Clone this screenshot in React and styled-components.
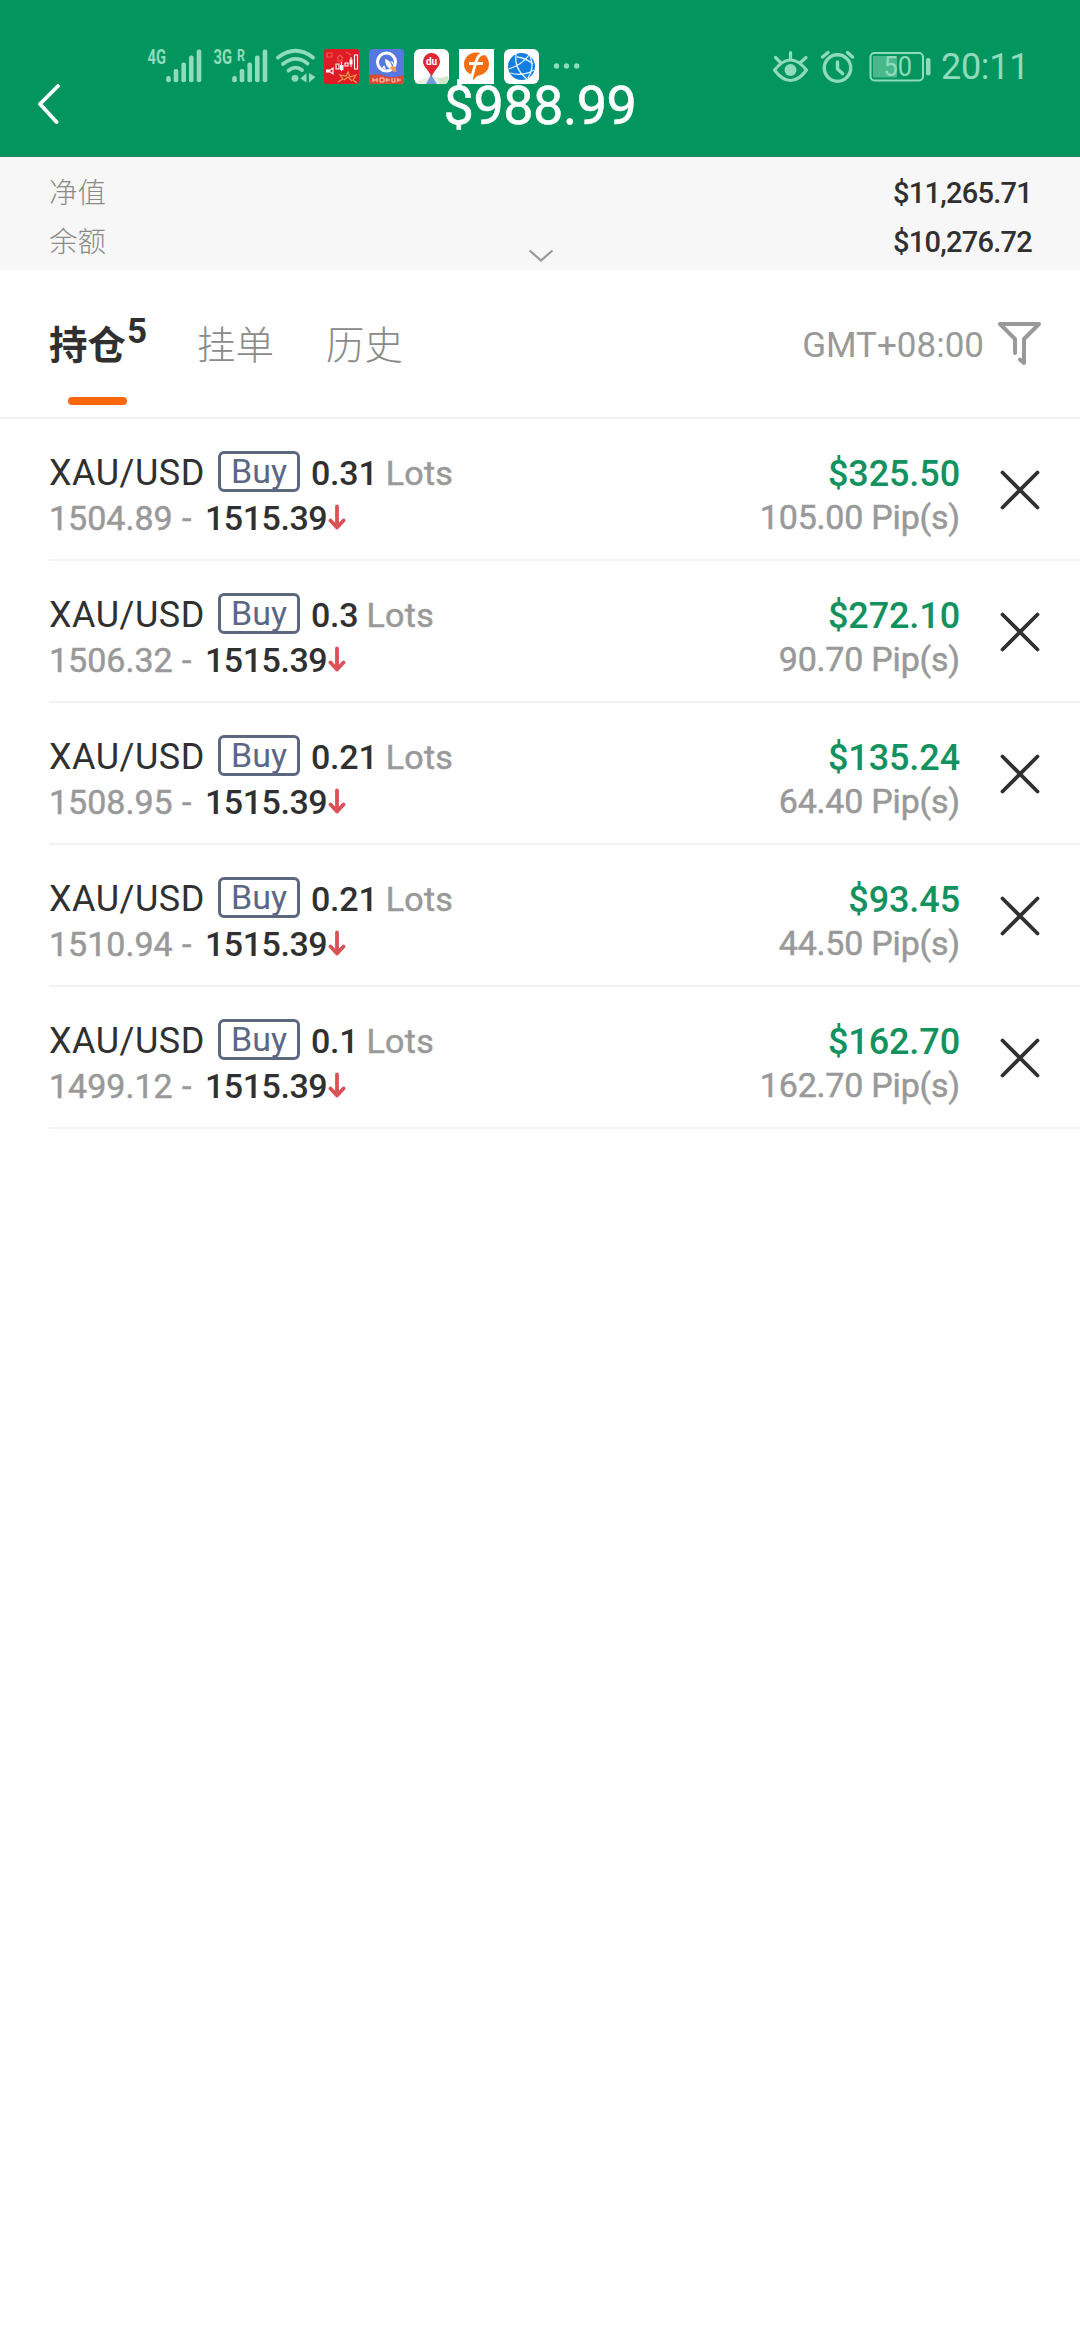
import React from 'react';
import styled, { createGlobalStyle } from 'styled-components';

const GlobalStyle = createGlobalStyle`
  * { box-sizing: border-box; }
  body {
    margin: 0;
    background: #fff;
    color: #303030;
    font-family: Roboto, "Noto Sans CJK SC", sans-serif;
  }
`;

const Screen = styled.main`
  width: 1080px;
  min-height: 2340px;
  background: #fff;
`;

const Header = styled.header`
  height: 157px;
  padding-top: 44px;
  background: #02965e;
  border-bottom: 1px solid #278861;
`;

const StatusBar = styled.div`
  display: flex;
  align-items: center;
  height: 40px;
  padding: 0 53px 0 147px;
  color: #90dbbb;
`;

const Glyph = styled.svg`
  display: block;
  flex: none;
  width: ${(p) => p.$w}px;
  height: 40px;
  margin-left: ${(p) => p.$gap || 0}px;
  overflow: visible;
`;

const Clock = styled.span`
  width: 86px;
  margin-left: auto;
  font-size: 36px;
  line-height: 40px;
  letter-spacing: -0.3px;
  padding-top: 6px;
  white-space: nowrap;
`;

const StatusRight = styled.div`
  display: flex;
  align-items: center;
  width: 255px;
  margin-left: auto;
`;

const TitleRow = styled.div`
  display: grid;
  grid-template-columns: 100px 1fr 100px;
  height: 42px;
`;

const BackButton = styled.button`
  display: flex;
  padding: 0 0 0 36px;
  border: 0;
  background: none;
`;

const Total = styled.h1`
  margin: 0;
  color: #fff;
  font-size: 54px;
  font-weight: 400;
  line-height: 43px;
  letter-spacing: -0.5px;
  text-align: center;
  -webkit-text-stroke: 0.6px #fff;
`;

const Summary = styled.section`
  display: grid;
  grid-template-columns: 1fr 26px 1fr;
  height: 113px;
  padding: 11px 48px 0 49px;
  background: #f7f7f7;
`;

const SummaryColumn = styled.div`
  display: flex;
  flex-direction: column;
  align-items: ${(p) => (p.$end ? 'flex-end' : 'flex-start')};
`;

const SummaryLabel = styled.span`
  height: 49px;
  color: #8a8a8a;
  font-size: 28.5px;
  font-weight: 300;
  line-height: 51px;
`;

const SummaryValue = styled.span`
  height: 49px;
  font-size: 29px;
  font-weight: 500;
  line-height: 50px;
  letter-spacing: -0.75px;
`;

const Expand = styled.svg`
  display: block;
  align-self: end;
  width: 26px;
  height: 13px;
  margin-bottom: 8px;
`;

const TabBar = styled.nav`
  display: flex;
  height: 149px;
  padding: 0 37px 0 49px;
  border-bottom: 2px solid #f3f3f3;
`;

const Tab = styled.div`
  position: relative;
  display: flex;
  width: ${(p) => p.$w}px;
  font-size: 38.5px;
  line-height: 151px;
  font-weight: ${(p) => (p.$active ? 700 : 300)};
  color: ${(p) => (p.$active ? '#303030' : '#8a8a8a')};
`;

const Count = styled.span`
  margin-left: 1px;
  font-size: 35px;
  font-weight: 700;
  line-height: 124px;
`;

const Underline = styled.span`
  position: absolute;
  left: 19px;
  bottom: 12px;
  width: 59px;
  height: 8px;
  border-radius: 4px;
  background: #fb670c;
`;

const Zone = styled.div`
  margin-left: auto;
  color: #999;
  font-size: 35px;
  line-height: 151px;
  letter-spacing: 0;
`;

const Filter = styled.svg`
  width: 46px;
  height: 60px;
  margin: 43px 0 0 13px;
  flex: none;
`;

const List = styled.ul`
  margin: 0;
  padding: 0 0 0 49px;
  list-style: none;
`;

const Row = styled.li`
  display: flex;
  height: 142px;
  padding-top: 32px;
  border-bottom: 2px solid #f3f3f3;
`;

const Info = styled.div`
  flex: 1;
`;

const Line = styled.div`
  display: flex;
  align-items: center;
  height: ${(p) => p.$h}px;
  white-space: nowrap;
  font-size: 34px;
  line-height: ${(p) => p.$h}px;
`;

const Symbol = styled.span`
  width: 169px;
  padding-top: 3px;
  font-size: 36px;
  letter-spacing: 0.5px;
`;

const Side = styled.span`
  display: flex;
  justify-content: center;
  width: 82px;
  height: 41px;
  margin-right: 11px;
  border: 3px solid #5b6880;
  border-radius: 6px;
  color: #5b6785;
  font-size: 34px;
  line-height: 35px;
`;

const Strong = styled.span`
  padding-top: ${(p) => p.$top || 0}px;
  color: #303030;
  font-weight: 500;
  letter-spacing: ${(p) => p.$ls || 0}px;
`;

const Muted = styled.span`
  padding-top: ${(p) => p.$top || 0}px;
  width: ${(p) => (p.$w ? `${p.$w}px` : 'auto')};
  margin-left: ${(p) => p.$gap || 0}px;
  color: #999;
  letter-spacing: ${(p) => p.$ls || 0}px;
  -webkit-text-stroke: 0.5px #999;
`;

const Arrow = styled.svg`
  width: 18px;
  height: 26px;
  margin: -2px 0 0 1px;
`;

const Result = styled.div`
  display: flex;
  flex-direction: column;
  align-items: flex-end;
  width: 240px;
`;

const Profit = styled.span`
  height: 43px;
  color: #13925f;
  font-size: 36px;
  font-weight: 500;
  line-height: 46px;
  letter-spacing: -0.1px;
`;

const Pips = styled.span`
  height: 42px;
  color: #999;
  font-size: 34px;
  line-height: 47px;
  letter-spacing: -0.2px;
  -webkit-text-stroke: 0.5px #999;
`;

const Close = styled.button`
  display: flex;
  width: 120px;
  padding: 18px 0 0 39px;
  border: 0;
  background: none;
`;

const positions = [
  { lots: '0.31', open: '1504.89', profit: '$325.50', pips: '105.00' },
  { lots: '0.3', open: '1506.32', profit: '$272.10', pips: '90.70' },
  { lots: '0.21', open: '1508.95', profit: '$135.24', pips: '64.40' },
  { lots: '0.21', open: '1510.94', profit: '$93.45', pips: '44.50' },
  { lots: '0.1', open: '1499.12', profit: '$162.70', pips: '162.70' },
];

const bars = [
  [21.5, 32],
  [29, 25],
  [36.7, 18.5],
  [44.3, 11.5],
  [52, 5.5],
];

function Signal({ label, roaming, gap }) {
  return (
    <Glyph $w={56} $gap={gap} viewBox="0 0 56 40" fill="currentColor">
      <text x="0.5" y="19.5" fontSize="20" fontWeight="700" textLength="18.5" lengthAdjust="spacingAndGlyphs">
        {label}
      </text>
      {roaming && (
        <text x="24" y="17" fontSize="16" fontWeight="700" textLength="8" lengthAdjust="spacingAndGlyphs">
          R
        </text>
      )}
      {bars.map(([x, top]) => (
        <rect key={x} x={x - 2.3} y={top} width="4.6" height={38.3 - top} rx="2" />
      ))}
    </Glyph>
  );
}

function Wifi() {
  return (
    <Glyph $w={42} $gap={6} viewBox="0 0 42 40" fill="none" stroke="currentColor" strokeWidth="3.8" strokeLinecap="round">
      <path d="M3 13.5Q20.5 0 38 13.5" />
      <path d="M8 20Q20.5 10 32.5 19.5" />
      <path d="M13.5 26.5Q20.5 21 27 26" />
      <circle cx="20" cy="34.3" r="3.4" fill="currentColor" stroke="none" />
      <path d="M31.5 29V38.500L25.500 34.500ZM34 29V38.500L40.500 33Z" fill="currentColor" stroke="none" />
    </Glyph>
  );
}

function CandleApp() {
  return (
    <Glyph $w={35} $gap={7} viewBox="0 0 35 40">
      <rect y="5" width="35" height="35" rx="3" fill="#df1c25" />
      <g fill="none" stroke="#ef5c58" strokeWidth="1.2">
        <path d="M3 9h5v4H3zM13 14l3-3 3 3M14 14v3h4v-3M22 8l5 3" />
      </g>
      <path d="M14 38l5-3-3-4 6 1 2-4 2 5 6-2-3 5 4 3M20 36l4-3 4 4" fill="none" stroke="#e8a04c" strokeWidth="1.2" />
      <g fill="none" stroke="#fff" strokeWidth="1.1">
        <path d="M5 27l4-3v6zM12 20h3v5h-3zM21 19h3v3h-3zM30.500 11h3v14h-3zM17.500 18v9M27 13v10" />
      </g>
      <path d="M2 25.500h4v3H2zM16 21h3.500v5H16zM25.500 15.500h3v5h-3z" fill="#fff" />
    </Glyph>
  );
}

function RocketApp() {
  return (
    <Glyph $w={35} $gap={10} viewBox="0 0 35 40">
      <rect y="5" width="35" height="35" rx="4" fill="#5678df" />
      <path d="M0 31Q9 29 16 32T35 31v6q0 3-3 3H3q-3 0-3-3z" fill="#dc4936" />
      <circle cx="17.500" cy="18" r="9" fill="none" stroke="#fff" strokeWidth="3" />
      <path d="M16 15q5 1 7 7l-2 3q-5-3-5-10z" fill="#fff" />
      <path d="M15 21l2 4-4-1zM21 17l3 1 1 4" fill="#fff" />
      <path d="M21 23l4-1q3 2 2 6-4 0-6-5z" fill="#ed9b50" />
      <path d="M4 34v4M4 36h4M8 34v4M11 34h4v4h-4zM18 34v4M16 36h5M23 34v4h3v-4M29 34v4M28 36h4" fill="none" stroke="#ffd2b0" strokeWidth="1" />
    </Glyph>
  );
}

function MapApp() {
  return (
    <Glyph $w={35} $gap={10} viewBox="0 0 35 40">
      <rect y="5" width="35" height="35" rx="6" fill="#fff" />
      <path d="M1 38l13-5 4-4 4 4 12 2v1q0 4-5 4H5q-3 0-4-2z" fill="#e6eee5" />
      <path d="M12 40l5-9 6 9z" fill="#6d9cdb" />
      <path d="M24 35l10-3v4q0 4-4 4h-4z" fill="#d1e6c6" />
      <path d="M17.500 33C15 26 9 23 9 17.500a8.500 8.500 0 0117 0C26 23 20 26 17.500 33z" fill="#e02835" />
      <text x="17.500" y="21" fontSize="10" fontWeight="700" fill="#fff" textAnchor="middle">
        du
      </text>
    </Glyph>
  );
}

function FApp() {
  return (
    <Glyph $w={35} $gap={10} viewBox="0 0 35 40">
      <rect y="5" width="35" height="35" fill="#fff" />
      <path d="M17.500 8.500c8 0 12.500 5 12.500 11.500S25 31 18 32l-4 4.500.5-5.500C8.500 29.500 5 26 5 20S10 8.500 17.500 8.500z" fill="#f46e13" />
      <path d="M27 9.500Q19 9 17 18l-4 14M10 19.500h14" fill="none" stroke="#fff" strokeWidth="2.800" />
    </Glyph>
  );
}

function GlobeApp() {
  return (
    <Glyph $w={35} $gap={10} viewBox="0 0 35 40">
      <rect y="5" width="35" height="35" rx="6" fill="#fff" />
      <circle cx="17.500" cy="22.500" r="13.500" fill="#147de0" />
      <path d="M4.500 25Q18 21 25 11M12 10q-2 15 11 25M6 29q12 4 24-3M26 12q5 11-2 22M13 13q9 1 16 7" fill="none" stroke="#e3f4ff" strokeWidth="1.300" />
    </Glyph>
  );
}

function Dots() {
  return (
    <Glyph $w={28} $gap={14} viewBox="0 0 28 40" fill="currentColor">
      <circle cx="3.500" cy="22" r="2.700" />
      <circle cx="13.500" cy="22" r="2.700" />
      <circle cx="23.700" cy="22" r="2.700" />
    </Glyph>
  );
}

function Eye() {
  return (
    <Glyph $w={38} viewBox="0 0 38 40" fill="none" stroke="currentColor" strokeWidth="3.200" strokeLinecap="round">
      <path d="M2.500 26Q10.500 16 18.500 16T34.500 26Q27 36.500 18.500 36.500T2.500 26z" strokeLinejoin="round" />
      <circle cx="18.500" cy="26" r="6" fill="currentColor" stroke="none" />
      <path d="M18.500 15.500V8.500M8.500 18.500L3.500 13.500M28.500 18.500L34 13.500" />
    </Glyph>
  );
}

function Alarm() {
  return (
    <Glyph $w={38} $gap={10} viewBox="0 0 38 40" fill="none" stroke="currentColor" strokeWidth="3.400" strokeLinecap="round">
      <circle cx="17.500" cy="24" r="13.200" />
      <path d="M2.500 13L8 8.500M27.500 8.500L32.500 13M17.500 18v7l5 4.500" />
    </Glyph>
  );
}

function Battery() {
  return (
    <Glyph $w={64} $gap={10} viewBox="0 0 64 40" fill="currentColor">
      <rect x="2.500" y="9" width="52.500" height="27.500" rx="4" fill="none" stroke="currentColor" strokeWidth="2" />
      <rect x="5" y="12" width="24" height="21.500" rx="1" opacity="0.5" />
      <rect x="58" y="14" width="4.500" height="17.500" rx="2" />
      <text x="15.500" y="32" fontSize="27" textLength="28.500" lengthAdjust="spacingAndGlyphs">
        50
      </text>
    </Glyph>
  );
}

function PositionRow({ item }) {
  return (
    <Row>
      <Info>
        <Line $h={41}>
          <Symbol>XAU/USD</Symbol>
          <Side>Buy</Side>
          <Strong $top={4} $ls={-0.2}>{item.lots}</Strong>
          <Muted $top={4} $gap={8} $ls={0.3}>Lots</Muted>
        </Line>
        <Line $h={52}>
          <Muted $w={133}>{item.open}</Muted>
          <Muted $w={23}>-</Muted>
          <Strong $ls={-0.45}>1515.39</Strong>
          <Arrow viewBox="0 0 18 26" fill="none" stroke="#da5257" strokeWidth="3.800" strokeLinecap="round" strokeLinejoin="round">
            <path d="M9 2.500V23M2.500 16.500L9 23.500L15.500 16.500" />
          </Arrow>
        </Line>
      </Info>
      <Result>
        <Profit>{item.profit}</Profit>
        <Pips>{item.pips} Pip(s)</Pips>
      </Result>
      <Close aria-label="Close position">
        <svg width="42" height="42" viewBox="0 0 42 42" fill="none" stroke="#303030" strokeWidth="3.800" strokeLinecap="round">
          <path d="M3.500 3.500L38.500 38.500M38.500 3.500L3.500 38.500" />
        </svg>
      </Close>
    </Row>
  );
}

export default function App() {
  return (
    <Screen>
      <GlobalStyle />
      <Header>
        <StatusBar>
          <Signal label="4G" />
          <Signal label="3G" roaming gap={10} />
          <Wifi />
          <CandleApp />
          <RocketApp />
          <MapApp />
          <FApp />
          <GlobeApp />
          <Dots />
          <StatusRight>
            <Eye />
            <Alarm />
            <Battery />
            <Clock>20:11</Clock>
          </StatusRight>
        </StatusBar>
        <TitleRow>
          <BackButton aria-label="Back">
            <svg width="26" height="42" viewBox="0 0 26 42" fill="none" stroke="#fff" strokeWidth="3.800" strokeLinecap="round" strokeLinejoin="round">
              <path d="M22 2L4 20L20.500 38" />
            </svg>
          </BackButton>
          <Total>$988.99</Total>
        </TitleRow>
      </Header>
      <Summary>
        <SummaryColumn>
          <SummaryLabel>净值</SummaryLabel>
          <SummaryLabel>余额</SummaryLabel>
        </SummaryColumn>
        <Expand viewBox="0 0 26 13" fill="none" stroke="#999" strokeWidth="2.200">
          <path d="M1.500 1.500L13 11.500L24.500 1.500" />
        </Expand>
        <SummaryColumn $end>
          <SummaryValue>$11,265.71</SummaryValue>
          <SummaryValue>$10,276.72</SummaryValue>
        </SummaryColumn>
      </Summary>
      <TabBar>
        <Tab $active $w={148}>
          持仓<Count>5</Count>
          <Underline />
        </Tab>
        <Tab $w={129}>挂单</Tab>
        <Tab $w={80}>历史</Tab>
        <Zone>GMT+08:00</Zone>
        <Filter viewBox="0 0 46 60" fill="none" stroke="#999" strokeWidth="4" strokeLinecap="round" strokeLinejoin="round">
          <path d="M18 40V26L3 11H42L27 26V50L23 46.500" />
        </Filter>
      </TabBar>
      <List>
        {positions.map((item) => (
          <PositionRow key={item.open} item={item} />
        ))}
      </List>
    </Screen>
  );
}
